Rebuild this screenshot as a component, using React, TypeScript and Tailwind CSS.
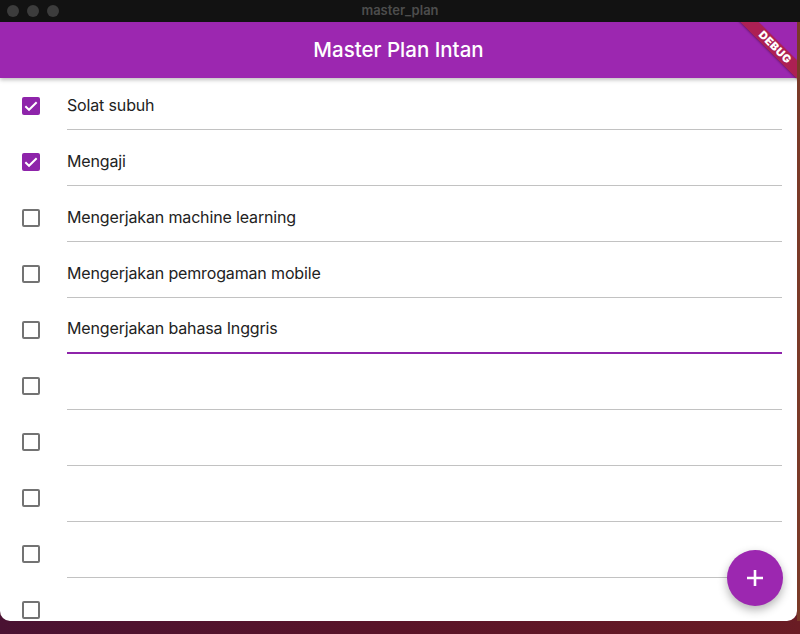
import React from "react";

const items: { text: string; done: boolean; focused?: boolean }[] = [
  { text: "Solat subuh", done: true },
  { text: "Mengaji", done: true },
  { text: "Mengerjakan machine learning", done: false },
  { text: "Mengerjakan pemrogaman mobile", done: false },
  { text: "Mengerjakan bahasa Inggris", done: false, focused: true },
  { text: "", done: false },
  { text: "", done: false },
  { text: "", done: false },
  { text: "", done: false },
  { text: "", done: false },
];

function Check({ done }: { done: boolean }) {
  if (done) {
    return (
      <div className="w-[18px] h-[18px] rounded-[2px] bg-[#8e24aa] flex items-center justify-center shrink-0">
        <svg width="16" height="16" viewBox="0 0 24 24">
          <path d="M3.5 12.5l5.5 5.2L20.5 6.5" fill="none" stroke="#fff" strokeWidth="3" />
        </svg>
      </div>
    );
  }
  return <div className="w-[18px] h-[18px] rounded-[2px] border-2 border-[#737373] shrink-0" />;
}

export default function App() {
  return (
    <div
      className="w-[800px] h-[634px] relative overflow-hidden bg-gradient-to-r from-[#4a1232] via-[#5a1428] to-[#6a1c24]"
      style={{ fontFamily: "Inter, 'Noto Sans', sans-serif" }}
    >
      <div className="h-[22px] bg-[#121212] flex items-center relative">
        <div className="flex gap-[8px] pl-[7px]">
          <div className="w-[12px] h-[12px] rounded-full bg-[#3c3c3c]" />
          <div className="w-[12px] h-[12px] rounded-full bg-[#3c3c3c]" />
          <div className="w-[12px] h-[12px] rounded-full bg-[#3c3c3c]" />
        </div>
        <div className="absolute inset-0 flex items-center justify-center text-[13px] font-semibold text-[#4d4d4d]">
          master_plan
        </div>
      </div>
      <div className="flex">
        <div className="w-[797px] h-[599px] bg-white rounded-b-[10px] overflow-hidden relative">
          <div className="h-[56px] bg-[#9c27b0] flex items-center justify-center shadow-[0_2px_4px_rgba(0,0,0,0.25)] relative z-10">
            <span className="text-white text-[20.5px] font-medium">Master Plan Intan</span>
          </div>
          <div className="flex flex-col">
            {items.map((it, i) => (
              <div key={i} className="h-[56px] flex items-center shrink-0">
                <div className="ml-[22px] mr-[27px]">
                  <Check done={it.done} />
                </div>
                <div
                  className={
                    "self-start flex-1 mr-[15px] h-[52px] flex items-center pt-[2px] text-[16px] tracking-[-0.15px] text-[#222222] " +
                    (it.focused ? "border-b-2 border-[#8e24aa]" : "border-b-[1.5px] border-[#c2c2c2]")
                  }
                >
                  {it.text}
                </div>
              </div>
            ))}
          </div>
          <div className="absolute right-[14px] bottom-[15px] w-[56px] h-[56px] rounded-full bg-[#9c27b0] flex items-center justify-center shadow-[0_4px_10px_rgba(0,0,0,0.3)] z-20">
            <svg width="20" height="20" viewBox="0 0 20 20">
              <path d="M10 2v16M2 10h16" stroke="#fff" strokeWidth="2.6" />
            </svg>
          </div>
          <div className="absolute w-[130px] h-[13px] left-[710px] top-[19px] rotate-45 bg-[#b71c1c]/[0.63] flex items-center justify-center z-30 shadow-[0_1px_2px_rgba(0,0,0,0.3)]">
            <span className="text-white text-[11px] font-black leading-none tracking-[0.6px]">DEBUG</span>
          </div>
        </div>
        <div className="w-[3px] h-[599px] bg-[#7a3a28]" />
      </div>
    </div>
  );
}
